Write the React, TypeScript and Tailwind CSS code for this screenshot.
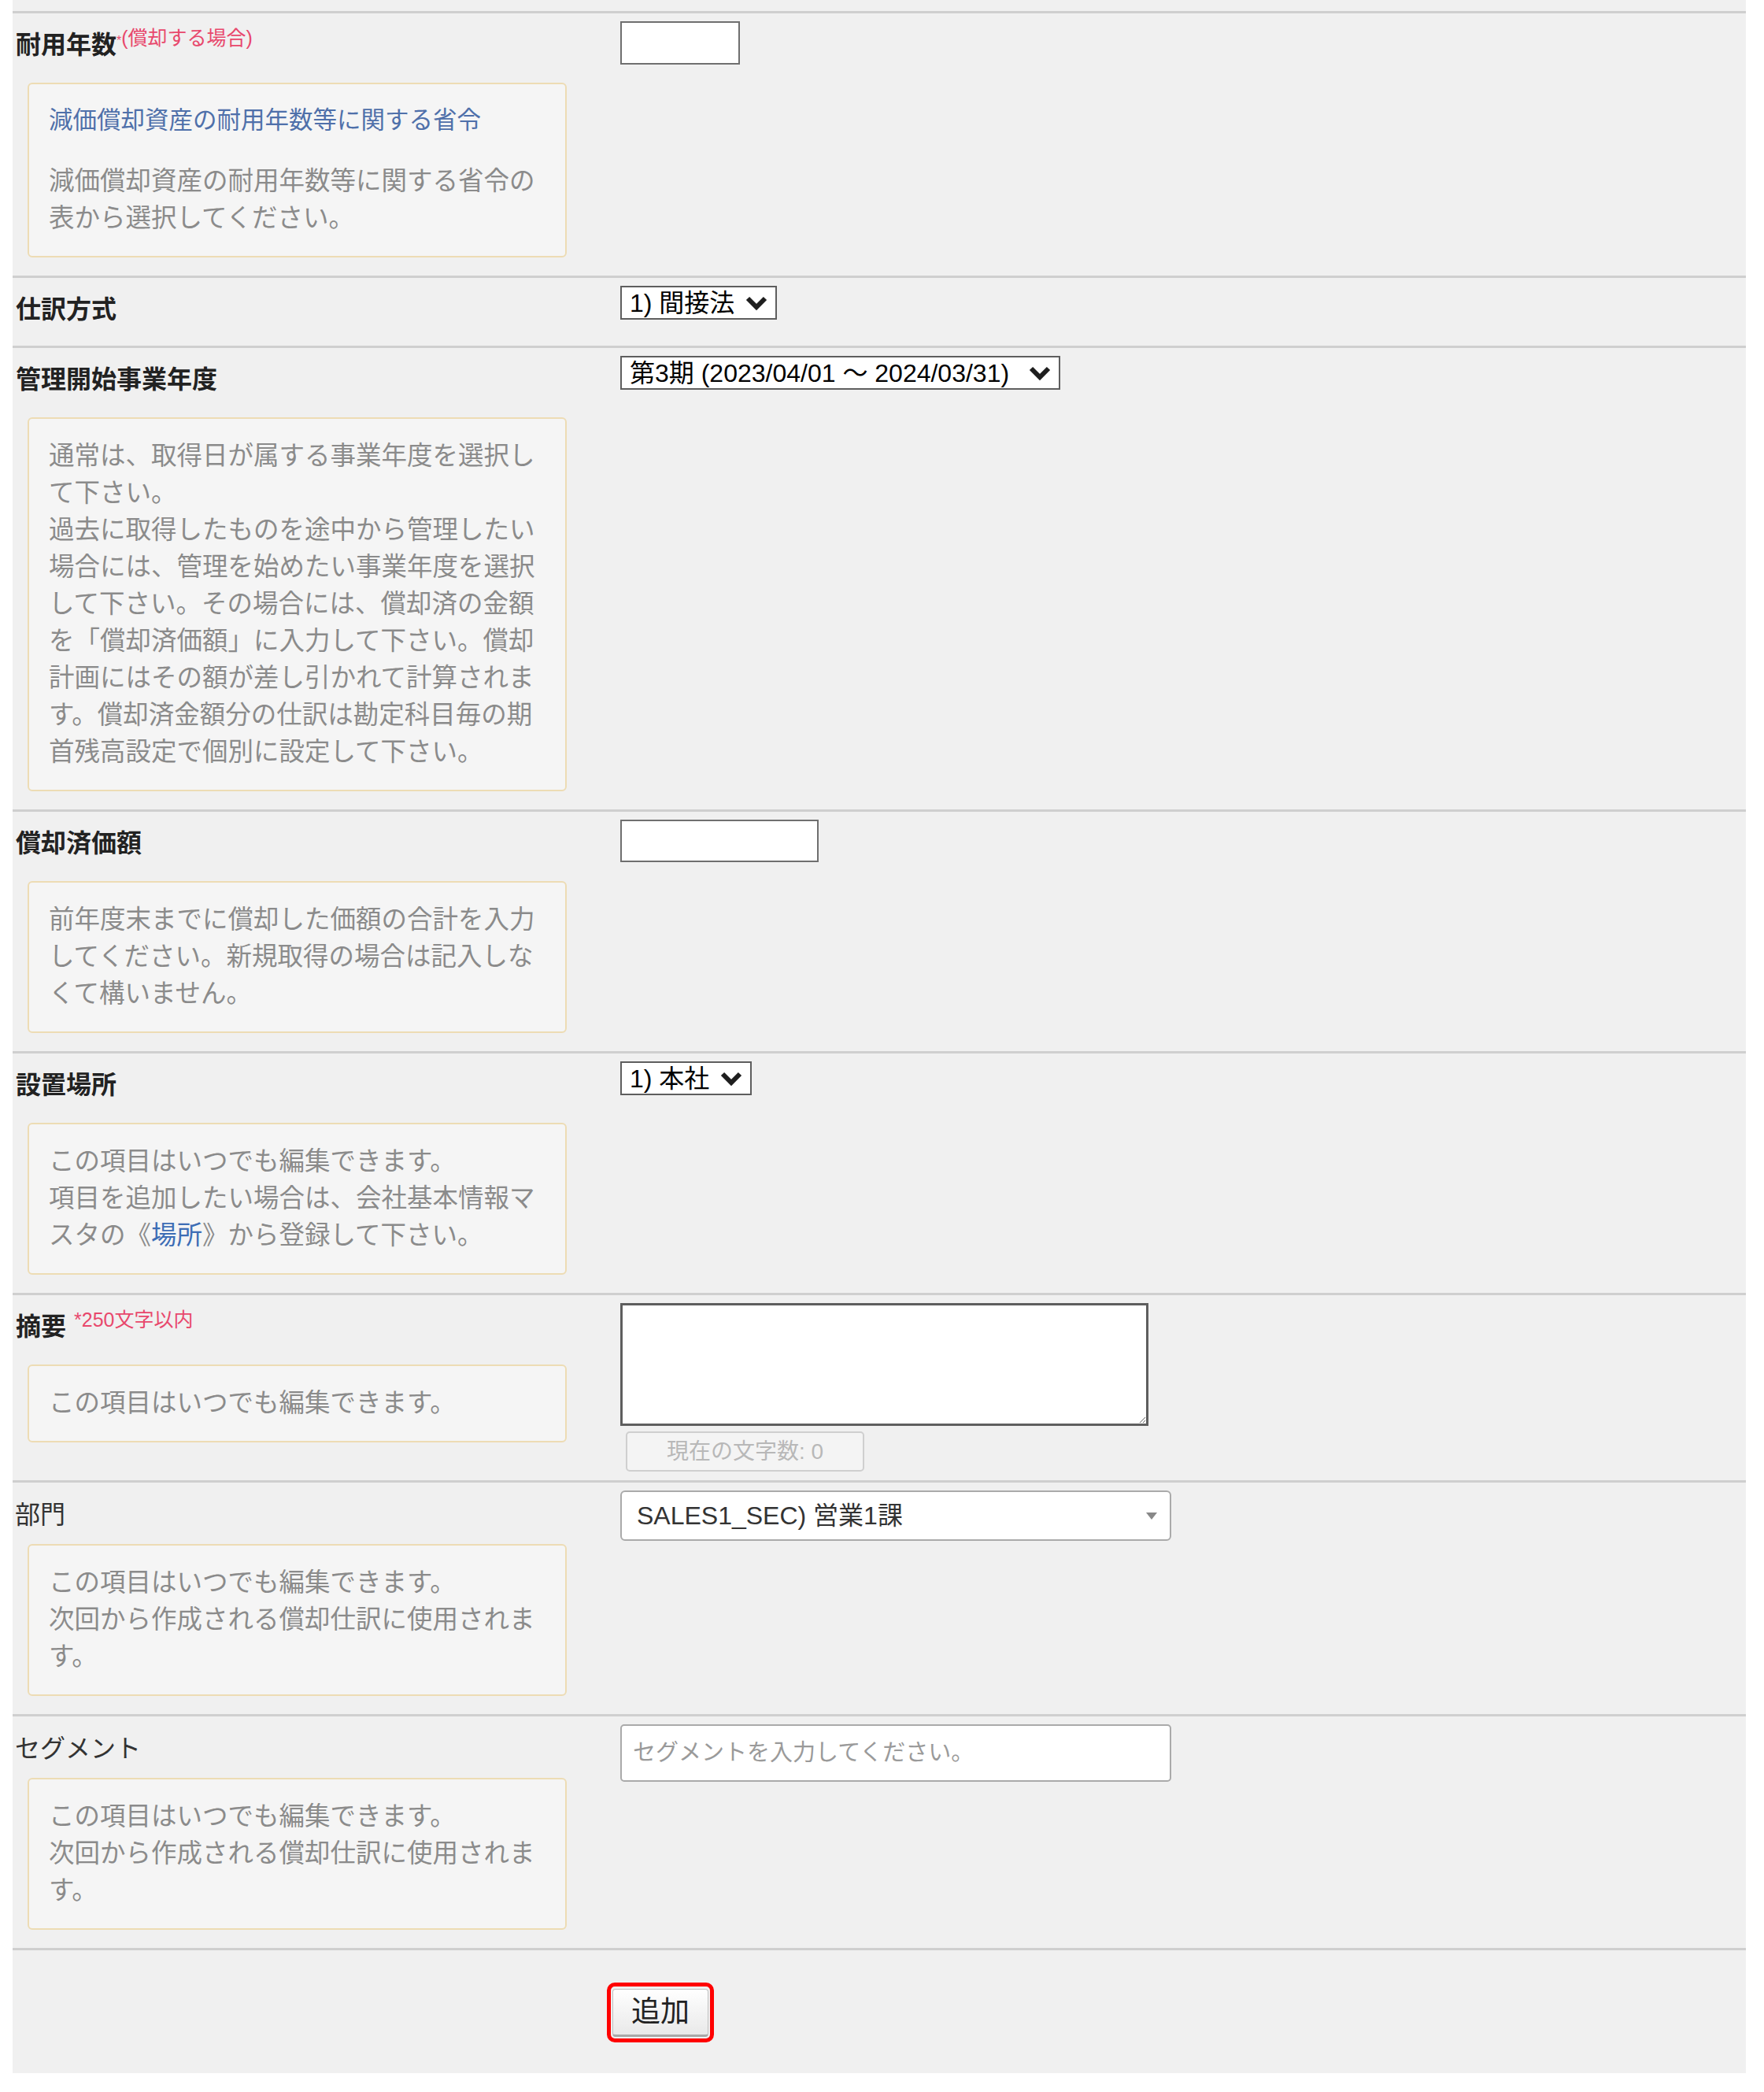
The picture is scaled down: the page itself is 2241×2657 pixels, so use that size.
import React from "react";

type RowProps = {
  label: string;
  bold?: boolean;
  note?: React.ReactNode;
  help?: React.ReactNode;
  children?: React.ReactNode;
};

function Chevron() {
  return (
    <svg
      width="30"
      height="20"
      viewBox="0 0 30 20"
      className="pointer-events-none absolute right-[11px] top-1/2 -translate-y-1/2"
    >
      <path d="M4 4 L15 15 L26 4" fill="none" stroke="#1e1e1e" strokeWidth="6" strokeLinejoin="miter" />
    </svg>
  );
}

function NativeSelect({ value, width }: { value: string; width: string }) {
  return (
    <div className={`relative ${width}`}>
      <select
        defaultValue={value}
        className="h-[43px] w-full appearance-none border-2 border-[#5e5e5e] bg-white pl-[10px] pr-[44px] text-[32px] leading-[38px] text-black outline-none"
      >
        <option>{value}</option>
      </select>
      <Chevron />
    </div>
  );
}

function Row({ label, bold = true, note, help, children }: RowProps) {
  return (
    <div className="flex border-t-[3px] border-[#cfcfcf] pt-[10px] pb-[11px]">
      <div className="w-[772px] shrink-0">
        <div
          className={
            bold
              ? "h-[65px] pl-[4px] pt-[6px] text-[32px] leading-[48px] font-bold text-[#222]"
              : "h-[55px] pl-[3px] pt-[7px] text-[32px] leading-[48px] font-normal text-[#333]"
          }
        >
          {label}
          {note}
        </div>
        {help && (
          <div className="ml-[19px] mt-[13px] mb-[12px] w-[685px] rounded-[6px] border-2 border-[#eddcb4] bg-[#f5f5f5] px-[25px] py-[24px] text-[32.5px] leading-[47px] text-[#8b8b8b]">
            {help}
          </div>
        )}
      </div>
      <div className="flex flex-col items-start">{children}</div>
    </div>
  );
}

export default function App() {
  const font = "font-['Liberation_Sans','Noto_Sans_CJK_JP',sans-serif]";

  return (
    <div className={`min-h-[2657px] w-full bg-white ${font}`}>
      <div className="ml-[16px] w-[2202px] bg-[#f0f0f0] pt-[14px]">
        <Row
          label="耐用年数"
          note={
            <span className="align-top text-[25px] leading-[30px] font-normal text-[#e8486c]">
              <span className="text-[16px]">*</span>(償却する場合)
            </span>
          }
          help={
            <>
              <div className="mb-[34px] text-[30.5px] leading-[42px] text-[#4f70aa]">
                減価償却資産の耐用年数等に関する省令
              </div>
              減価償却資産の耐用年数等に関する省令の
              <br />
              表から選択してください。
            </>
          }
        >
          <input type="text" className="h-[55px] w-[152px] border-2 border-[#6f6f6f] bg-white outline-none" />
        </Row>

        <Row label="仕訳方式">
          <NativeSelect value="1) 間接法" width="w-[199px]" />
        </Row>

        <Row
          label="管理開始事業年度"
          help={
            <>
              通常は、取得日が属する事業年度を選択し
              <br />
              て下さい。
              <br />
              過去に取得したものを途中から管理したい
              <br />
              場合には、管理を始めたい事業年度を選択
              <br />
              して下さい。その場合には、償却済の金額
              <br />
              を「償却済価額」に入力して下さい。償却
              <br />
              計画にはその額が差し引かれて計算されま
              <br />
              す。償却済金額分の仕訳は勘定科目毎の期
              <br />
              首残高設定で個別に設定して下さい。
            </>
          }
        >
          <NativeSelect value="第3期 (2023/04/01 ～ 2024/03/31)" width="w-[559px]" />
        </Row>

        <Row
          label="償却済価額"
          help={
            <>
              前年度末までに償却した価額の合計を入力
              <br />
              してください。新規取得の場合は記入しな
              <br />
              くて構いません。
            </>
          }
        >
          <input type="text" className="h-[54px] w-[252px] border-2 border-[#6f6f6f] bg-white outline-none" />
        </Row>

        <Row
          label="設置場所"
          help={
            <>
              この項目はいつでも編集できます。
              <br />
              項目を追加したい場合は、会社基本情報マ
              <br />
              スタの《<span className="text-[#3d6db5]">場所</span>》から登録して下さい。
            </>
          }
        >
          <NativeSelect value="1) 本社" width="w-[167px]" />
        </Row>

        <Row
          label="摘要"
          note={
            <span className="ml-[10px] align-top text-[25px] leading-[30px] font-normal text-[#e8486c]">
              *250文字以内
            </span>
          }
          help={<>この項目はいつでも編集できます。</>}
        >
          <textarea className="h-[156px] w-[671px] resize border-[3px] border-[#5e5e5e] bg-white outline-none" />
          <button
            type="button"
            disabled
            className="ml-[7px] mt-[7px] h-[51px] w-[303px] rounded-[5px] border-2 border-[#cfcfcf] bg-[#f4f4f4] text-[28px] text-[#b8b8b8]"
          >
            現在の文字数: 0
          </button>
        </Row>

        <Row
          label="部門"
          bold={false}
          help={
            <>
              この項目はいつでも編集できます。
              <br />
              次回から作成される償却仕訳に使用されま
              <br />
              す。
            </>
          }
        >
          <div className="flex h-[64px] w-[700px] items-center justify-between rounded-[6px] border-2 border-[#aaaaaa] bg-white pl-[19px] pr-[16px] text-[32px] text-[#333]">
            <span>SALES1_SEC) 営業1課</span>
            <svg width="14" height="9" viewBox="0 0 14 9">
              <path d="M0 0 L14 0 L7 9 Z" fill="#888" />
            </svg>
          </div>
        </Row>

        <Row
          label="セグメント"
          bold={false}
          help={
            <>
              この項目はいつでも編集できます。
              <br />
              次回から作成される償却仕訳に使用されま
              <br />
              す。
            </>
          }
        >
          <input
            type="text"
            placeholder="セグメントを入力してください。"
            className="h-[73px] w-[700px] rounded-[5px] border-2 border-[#aaaaaa] bg-white px-[14px] text-[29px] text-[#333] outline-none placeholder:text-[#9a9a9a]"
          />
        </Row>

        <div className="border-t-[3px] border-[#cfcfcf] pt-[41px] pb-[39px] pl-[755px]">
          <div className="inline-flex h-[76px] w-[136px] items-center justify-center rounded-[10px] border-[5px] border-[#ff0000]">
            <button
              type="button"
              className="h-[61px] w-[122px] rounded-[4px] border border-[#c0c0c0] border-b-[3px] border-b-[#a8a8a8] bg-gradient-to-b from-white to-[#e9e9e9] text-[37px] leading-none text-[#222]"
            >
              追加
            </button>
          </div>
        </div>
      </div>
    </div>
  );
}
